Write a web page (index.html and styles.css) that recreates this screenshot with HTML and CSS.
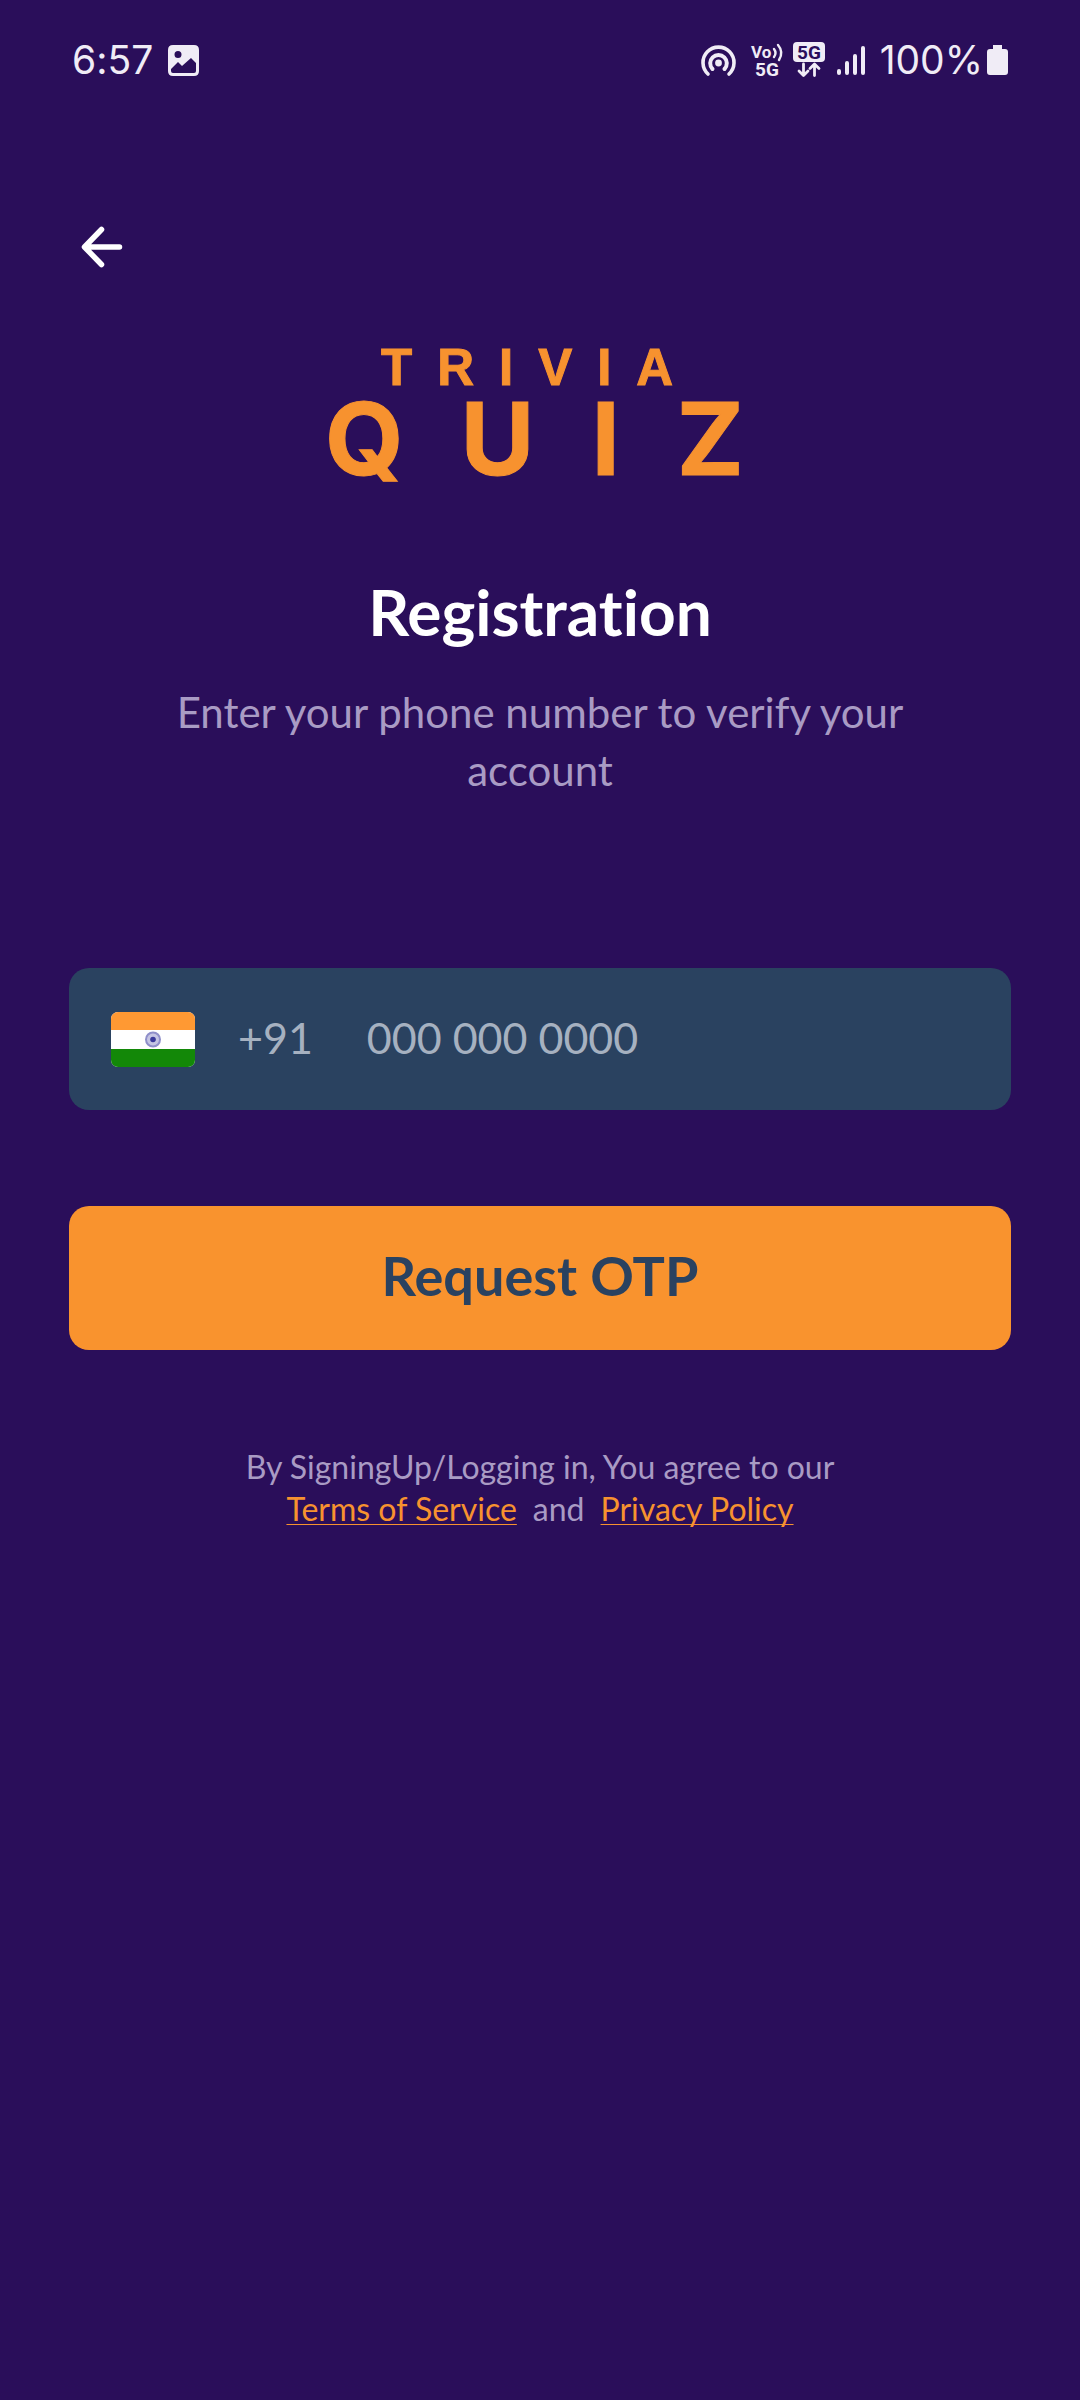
FILE: index.html
```html
<!DOCTYPE html>
<html lang="en">
<head>
<meta charset="utf-8">
<meta name="viewport" content="width=device-width, initial-scale=1">
<title>Trivia Quiz – Registration</title>
<link rel="stylesheet" href="styles.css">
</head>
<body>
<header class="status">
  <div class="status-group status-left">
    <span class="status-text">6:57</span>
    <svg width="31" height="31" viewBox="0 0 31 31" aria-hidden="true">
      <path fill="currentColor" fill-rule="evenodd" d="M5 0H26Q31 0 31 5V26Q31 31 26 31H5Q0 31 0 26V5Q0 0 5 0ZM10 6A3.500 3.500 0 1 0 10 13A3.500 3.500 0 1 0 10 6ZM3 24V26Q3 28 5 28H26Q28 28 28 26V18L23 13L14 21L10 17Z"/>
    </svg>
  </div>
  <div class="status-group status-right">
    <svg width="168" height="52" viewBox="0 -8 168 52" role="img" aria-label="Hotspot on, 5G, full signal">
      <g fill="none" stroke="currentColor" stroke-width="3.600" stroke-linecap="round">
        <path d="M7 32A15.500 15.500 0 1 1 28 32"/>
        <path stroke-width="4" d="M11.500 27A8.300 8.300 0 1 1 23.500 27"/>
      </g>
      <circle cx="17.500" cy="21" r="3.400" fill="currentColor"/>
      <g class="badge-text" fill="currentColor">
        <text x="50" y="16" font-size="17">Vo</text>
        <text x="54" y="34" font-size="19">5G</text>
      </g>
      <g fill="none" stroke="currentColor" stroke-width="2.400" stroke-linecap="round">
        <path d="M73 7Q76 11 73 15M77 3Q83 10 78 18"/>
      </g>
      <rect x="92" y="0" width="32" height="20" rx="4" fill="currentColor"/>
      <text class="badge-text" x="96" y="17" font-size="19" fill="#2a0e5a">5G</text>
      <g fill="none" stroke="currentColor" stroke-width="2.800" stroke-linecap="round" stroke-linejoin="round">
        <path d="M102.500 22V33M98 29L102.500 33.500L107 29M113.500 33.500V23M109 26.500L113.500 22L118 26.500"/>
      </g>
      <path stroke="currentColor" stroke-width="4" stroke-linecap="round" d="M138 29V31M146 21V31M154 14V31M162 6V31"/>
    </svg>
    <span class="status-text level">100%</span>
    <svg width="21" height="30" viewBox="0 0 21 30" aria-hidden="true">
      <path fill="currentColor" d="M6 0H15V4H18Q21 4 21 7V27Q21 30 18 30H3Q0 30 0 27V7Q0 4 3 4H6Z"/>
    </svg>
  </div>
</header>
<main class="screen">
  <button class="back" type="button" aria-label="Back">
    <svg width="42" height="42" viewBox="0 0 42 42" fill="none" stroke="currentColor" stroke-width="5.500" stroke-linecap="round" stroke-linejoin="round" aria-hidden="true">
      <path d="M38.500 21H4M20.500 3.500L3.500 21L20.500 38.500"/>
    </svg>
  </button>
  <svg class="logo" width="560" height="190" viewBox="0 0 560 190" role="img" aria-label="Trivia Quiz">
    <text class="logo-top" x="121" y="61" font-size="51" letter-spacing="25">TRIVIA</text>
    <text class="logo-main" x="65" y="151" font-size="101" letter-spacing="57">QUIZ</text>
  </svg>
  <h1 class="title">Registration</h1>
  <p class="lead">Enter your phone number to verify your account</p>
  <form class="form">
    <div class="field">
      <svg width="84" height="55" viewBox="0 0 84 55" role="img" aria-label="India">
        <clipPath id="flag-shape"><rect width="84" height="55" rx="7"/></clipPath>
        <g clip-path="url(#flag-shape)">
          <rect width="84" height="55" fill="#fff"/>
          <rect width="84" height="18" fill="#ff9933"/>
          <rect y="37" width="84" height="18" fill="#138808"/>
        </g>
        <circle cx="42" cy="27.500" r="7" fill="#c5c5e4" stroke="#8f8fca" stroke-width="2"/>
        <circle cx="42" cy="27.500" r="2.800" fill="#3a3a9c"/>
      </svg>
      <label class="code" for="phone">+91</label>
      <input class="phone" id="phone" type="tel" placeholder="000 000 0000">
    </div>
    <button class="submit" type="submit">Request OTP</button>
  </form>
  <p class="legal">By SigningUp/Logging in, You agree to our<br><a href="#terms">Terms of Service</a><span class="and">and</span><a href="#privacy">Privacy Policy</a></p>
</main>
</body>
</html>
```
FILE: styles.css
```css
* {
  box-sizing: border-box;
}

body {
  margin: 0;
  min-height: 100vh;
  background: #2a0e5a;
  color: #fff;
  font-family: Lato, sans-serif;
  font-variant-ligatures: none;
}

.status {
  display: flex;
  justify-content: space-between;
  align-items: center;
  height: 120px;
  padding: 0 72px;
  color: #f0ecf6;
}

.status-group {
  display: flex;
  align-items: center;
}

.status-left {
  gap: 15px;
}

.status-text {
  font-family: Inter, sans-serif;
  font-size: 39px;
  line-height: 48px;
}

.level {
  margin: 0 4px 0 11px;
}

.badge-text {
  font-family: Roboto, sans-serif;
  font-weight: 700;
}

.screen {
  display: flex;
  flex-direction: column;
  align-items: center;
  padding: 96px 69px 80px;
}

.back {
  display: flex;
  align-self: flex-start;
  padding: 10px 12px;
  border: 0;
  background: none;
  color: #fff;
}

.logo {
  max-width: 100%;
  margin-top: 46px;
  fill: #f7922f;
  stroke: #f7922f;
  stroke-width: 1px;
  font-weight: 700;
}

.logo-top {
  font-family: "Liberation Sans", sans-serif;
}

.logo-main {
  font-family: Inter, sans-serif;
}

.title {
  margin: 58px 0 0;
  font-size: 64px;
  line-height: 80px;
  font-weight: 700;
}

.lead {
  max-width: 800px;
  margin: 31px 0 0;
  color: #a99bc4;
  font-size: 42px;
  line-height: 58px;
  text-align: center;
}

.form {
  display: flex;
  flex-direction: column;
  gap: 96px;
  width: 100%;
  margin-top: 169px;
}

.field {
  display: flex;
  align-items: center;
  height: 142px;
  padding: 0 42px;
  border-radius: 20px;
  background: #2a4260;
  color: #a6b1c0;
  font-size: 43px;
}

.code {
  margin-left: 43px;
  padding-bottom: 4px;
}

.phone {
  flex: 1;
  min-width: 0;
  margin-left: 54px;
  padding: 0 0 4px;
  border: 0;
  outline: 0;
  background: none;
  color: inherit;
  font: inherit;
}

.phone::placeholder {
  color: inherit;
  opacity: 1;
}

.submit {
  height: 144px;
  padding: 0 20px 6px;
  border: 0;
  border-radius: 20px;
  background: #f9932e;
  color: #2a4260;
  font: inherit;
  font-size: 54px;
  font-weight: 700;
}

.legal {
  margin: 96px 0 0;
  color: #a99bc4;
  font-size: 32px;
  line-height: 42px;
  text-align: center;
}

.legal a {
  color: #f7922f;
  text-decoration-thickness: 1px;
  text-underline-offset: 3px;
  text-decoration-skip-ink: none;
}

.and {
  margin: 0 16px;
}
```
